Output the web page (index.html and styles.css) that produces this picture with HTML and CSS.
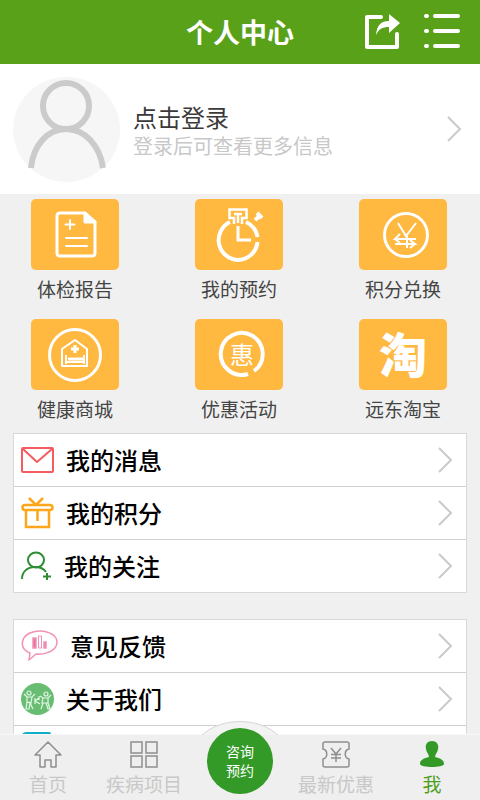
FILE: index.html
```html
<!DOCTYPE html>
<html lang="zh-CN">
<head>
<meta charset="utf-8">
<meta name="viewport" content="width=device-width, initial-scale=1">
<title>个人中心</title>
<link rel="stylesheet" href="styles.css">
</head>
<body>
<header class="topbar">
  <h1 class="topbar-title">个人中心</h1>
  <div class="topbar-actions">
    <button class="icon-button" type="button" aria-label="分享">
      <svg width="36" height="36" viewBox="0 0 36 36" fill="none" stroke="#fff" stroke-width="4" stroke-linecap="round" stroke-linejoin="round">
        <path d="M17 3H3V33H33V20"/>
        <path d="M12 21C13 11 17 7 25 7V0L36 9L25 19V13C18 13 15 15 12 21Z" fill="#fff" stroke="none"/>
      </svg>
    </button>
    <button class="icon-button" type="button" aria-label="菜单">
      <svg width="36" height="36" viewBox="0 0 36 36" stroke="#fff" stroke-width="4" stroke-linecap="round">
        <path d="M2 2H3M11 2H34M2 17H3M11 17H34M2 32H3M11 32H34"/>
      </svg>
    </button>
  </div>
</header>

<main class="content">
  <a class="profile" href="#login">
    <svg class="avatar" viewBox="0 0 107 105">
      <ellipse cx="53.500" cy="52.500" rx="53.500" ry="52.500" fill="#f6f6f6"/>
      <g fill="none" stroke="#cbcbcb" stroke-width="6">
        <circle cx="53" cy="29" r="23"/>
        <path d="M18 91C20 69 34 52 53 52S87 69 90 91"/>
      </g>
    </svg>
    <span class="profile-text">
      <strong class="profile-name">点击登录</strong>
      <span class="profile-hint">登录后可查看更多信息</span>
    </span>
    <svg class="chevron" viewBox="0 0 16 26"><path d="M2 1L14 13L2 25"/></svg>
  </a>

  <nav class="shortcuts" aria-label="快捷服务">
    <a class="shortcut" href="#report">
      <span class="tile">
        <svg viewBox="0 0 88 71" fill="none" stroke="#fff" stroke-width="3" stroke-linecap="round" stroke-linejoin="round">
          <path d="M54 14H29Q26 14 26 17V54Q26 57 29 57H61Q64 57 64 54V23Z"/>
          <path d="M54 14V23H64Z" fill="#fff"/>
          <path d="M39 21V30M34.500 25.500H43.500M35 39H56M35 47H56" stroke-width="2"/>
        </svg>
      </span>
      <span class="shortcut-label">体检报告</span>
    </a>
    <a class="shortcut" href="#booking">
      <span class="tile">
        <svg viewBox="0 0 88 71" fill="none" stroke="#fff" stroke-width="4">
          <path d="M35 23A20 20 0 0 0 42.500 61A20 20 0 0 0 62.500 43M62.500 38A20 20 0 0 0 51 23"/>
          <path d="M39 25V19H34.500V10.500H51.500V19H47V25M39 15H47M43 15V24" stroke-width="2.500"/>
          <path d="M43 27V41H56" stroke-width="3"/>
          <path d="M60 21L65 17M62 14L67 19" stroke-width="4"/>
        </svg>
      </span>
      <span class="shortcut-label">我的预约</span>
    </a>
    <a class="shortcut" href="#exchange">
      <span class="tile">
        <svg viewBox="0 0 88 71" fill="none" stroke="#fff" stroke-width="2">
          <circle cx="47" cy="36" r="21.500" stroke-width="3"/>
          <path d="M39 24L47 37L57 24M48 37V49M57 40H36L41 35M36 40L41 44M36 45H56L51 41M56 45L51 49"/>
        </svg>
      </span>
      <span class="shortcut-label">积分兑换</span>
    </a>
    <a class="shortcut" href="#mall">
      <span class="tile">
        <svg viewBox="0 0 88 71" fill="none" stroke="#fff" stroke-width="2">
          <circle cx="44" cy="36" r="25.500" stroke-width="3"/>
          <path d="M31 47V30L44 21L56 30V47Z" stroke-linejoin="round"/>
          <path d="M44 26V34M40 30H48" stroke-width="3"/>
          <path d="M35 36V45M53 36V45M35 43H53"/>
          <path d="M37 40H52" stroke-width="3"/>
        </svg>
      </span>
      <span class="shortcut-label">健康商城</span>
    </a>
    <a class="shortcut" href="#offers">
      <span class="tile">
        <svg viewBox="0 0 88 71" fill="none" stroke="#fff" stroke-width="4">
          <path d="M59 52A21 21 0 1 0 53 55"/>
          <text x="47" y="45" class="glyph-offer">惠</text>
        </svg>
      </span>
      <span class="shortcut-label">优惠活动</span>
    </a>
    <a class="shortcut" href="#taobao">
      <span class="tile tile-glyph">淘</span>
      <span class="shortcut-label">远东淘宝</span>
    </a>
  </nav>

  <ul class="menu">
    <li><a class="menu-row" href="#messages">
      <svg width="33" height="26" viewBox="0 0 33 26" fill="none" stroke="#f55c60" stroke-width="2" stroke-linejoin="round"><rect x="1" y="1" width="31" height="24" rx="1"/><path d="M2 2L16 15L31 2"/></svg>
      <span class="menu-label">我的消息</span>
      <svg class="chevron" viewBox="0 0 16 26"><path d="M2 1L14 13L2 25"/></svg>
    </a></li>
    <li><a class="menu-row" href="#points">
      <svg width="33" height="32" viewBox="0 0 33 32" fill="none" stroke="#fba61b" stroke-width="2.500"><rect x="1.500" y="8" width="30" height="5" rx="2.500"/><path d="M5 13V30H28V13M16.500 13V24M15 8L8 1M15 8L22 1"/></svg>
      <span class="menu-label">我的积分</span>
      <svg class="chevron" viewBox="0 0 16 26"><path d="M2 1L14 13L2 25"/></svg>
    </a></li>
    <li><a class="menu-row" href="#following">
      <svg width="31" height="30" viewBox="0 0 31 30" fill="none" stroke="#2e8c32" stroke-width="2"><ellipse cx="15" cy="9" rx="8" ry="7.500"/><path d="M1 28C1 21 6 16 14 16C19 16 23 18 25 21M26 22V29M22 25.500H30"/></svg>
      <span class="menu-label">我的关注</span>
      <svg class="chevron" viewBox="0 0 16 26"><path d="M2 1L14 13L2 25"/></svg>
    </a></li>
  </ul>

  <ul class="menu">
    <li><a class="menu-row" href="#feedback">
      <svg width="37" height="32" viewBox="0 0 37 32" fill="none" stroke="#f191b6" stroke-width="1.500"><path d="M9 23C-3 18 0 5 12 2C24 -1 36 4 36 12C36 20 26 25 15 24L8 30Z" stroke-linejoin="round"/><path d="M12 8H15V18H12ZM23 12H25V18H23Z" fill="#ed6f9f"/><path d="M17.500 6H20.500V18H17.500Z" stroke-width="1"/></svg>
      <span class="menu-label">意见反馈</span>
      <svg class="chevron" viewBox="0 0 16 26"><path d="M2 1L14 13L2 25"/></svg>
    </a></li>
    <li><a class="menu-row" href="#about">
      <svg width="33" height="32" viewBox="0 0 33 32" fill="none" stroke="#e3f6e6" stroke-width="1.200"><ellipse cx="16.500" cy="16" rx="16.500" ry="16" fill="#68bd73" stroke="none"/><circle cx="8" cy="10" r="2"/><circle cx="25" cy="11" r="2"/><path d="M3 11L6 14H11L14 11M6 14V19L10 20L11 14M6 19L5 26H8L9 20L12 26M19 13L22 15H27L30 12M22 15L21 20H27V15M22 20L20 26M25 20L27 26H29L27 20M14 15V21M14 18L18 15M14 18L19 21M18 13V17"/></svg>
      <span class="menu-label">关于我们</span>
      <svg class="chevron" viewBox="0 0 16 26"><path d="M2 1L14 13L2 25"/></svg>
    </a></li>
    <li><a class="menu-row" href="#more" aria-label="更多">
      <svg width="30" height="40" viewBox="0 0 30 40" fill="none" stroke="#10adc6" stroke-width="4" stroke-linecap="round"><path d="M28 2H6Q2 2 2 6V38H28"/></svg>
    </a></li>
  </ul>
</main>

<nav class="tabbar" aria-label="主导航">
  <a class="tab" href="#home">
    <svg width="28" height="28" viewBox="0 0 28 28" fill="none" stroke="#8f8f8f" stroke-width="1.500" stroke-linejoin="round"><path d="M14 2L1 15H6V27H11V20H17V27H22V15H27Z"/></svg>
    <span>首页</span>
  </a>
  <a class="tab" href="#projects">
    <svg width="28" height="28" viewBox="0 0 28 28" fill="none" stroke="#8f8f8f" stroke-width="1.500"><rect x="1" y="2" width="11" height="11"/><rect x="16" y="2" width="11" height="11"/><rect x="1" y="16" width="11" height="11"/><rect x="16" y="16" width="11" height="11"/></svg>
    <span>疾病项目</span>
  </a>
  <div class="tab-center">
    <svg class="bump" viewBox="0 0 76 14"><path d="M0 14C20 -4 56 -4 76 14" fill="#f3f3f3" stroke="#d6d6d6"/></svg>
    <button class="consult" type="button">咨询<br>预约</button>
  </div>
  <a class="tab" href="#deals">
    <svg width="28" height="28" viewBox="0 0 28 28" fill="none" stroke="#8f8f8f" stroke-width="1.500"><path d="M3 2H25Q27 2 27 4V9C22 10 22 18 27 19V25Q27 27 25 27H3Q1 27 1 25V19C6 18 6 10 1 9V4Q1 2 3 2ZM9 8L14 14L19 8M14 14V22M9 14.500H19M9 18H19"/></svg>
    <span>最新优惠</span>
  </a>
  <a class="tab tab-active" href="#me" aria-current="page">
    <svg width="28" height="28" viewBox="0 0 28 28" fill="#349a27"><path d="M14 1C9 1 7 5 8 9C8 12 11 14 11 17C6 18 2 20 2 24C2 28 26 28 26 24C26 20 22 18 17 17C17 14 20 12 20 9C21 5 19 1 14 1Z"/></svg>
    <span>我</span>
  </a>
</nav>
</body>
</html>
```

FILE: styles.css
```css
* {
  box-sizing: border-box;
}

body {
  margin: 0;
  height: 100vh;
  display: flex;
  flex-direction: column;
  overflow: hidden;
  background: #f0f0f0;
  color: #000;
  font-family: "Noto Sans CJK SC", sans-serif;
}

a {
  color: inherit;
  text-decoration: none;
}

button {
  padding: 0;
  border: 0;
  background: none;
  font: inherit;
}

svg {
  display: block;
  flex: none;
}

.topbar {
  flex: none;
  display: grid;
  grid-template-columns: 1fr auto 1fr;
  align-items: center;
  height: 64px;
  padding: 0 20px;
  background: #5aa11a;
  color: #fff;
}

.topbar-title {
  grid-column: 2;
  margin: 0;
  font-size: 27px;
  line-height: 38px;
  font-weight: 700;
}

.topbar-actions {
  display: flex;
  justify-content: flex-end;
  gap: 24px;
}

.content {
  flex: 1;
  min-height: 0;
  overflow: hidden;
}

.profile {
  display: flex;
  align-items: center;
  gap: 13px;
  height: 130px;
  padding: 0 18px 0 13px;
  background: #fff;
}

.avatar {
  width: 107px;
  height: 105px;
}

.profile-text {
  flex: 1;
  display: flex;
  flex-direction: column;
  padding-top: 5px;
}

.profile-name {
  color: #3a3a3a;
  font-size: 24px;
  line-height: 28px;
  font-weight: 400;
}

.profile-hint {
  color: #c8c8c8;
  font-size: 20px;
  line-height: 30px;
}

.chevron {
  width: 16px;
  height: 26px;
  fill: none;
  stroke: #cacaca;
  stroke-width: 2;
}

.shortcuts {
  display: grid;
  grid-template-columns: repeat(3, 88px);
  justify-content: space-between;
  row-gap: 15px;
  padding: 5px 33px 9px 31px;
}

.shortcut {
  display: flex;
  flex-direction: column;
  align-items: center;
  gap: 4px;
}

.tile {
  width: 88px;
  height: 71px;
  border-radius: 5px;
  background: #ffb840;
}

.tile-glyph {
  color: #fff;
  font-size: 48px;
  font-weight: 900;
  line-height: 66px;
  text-align: center;
}

.glyph-offer {
  fill: #fff;
  stroke: none;
  font-size: 24px;
  text-anchor: middle;
}

.shortcut-label {
  color: #444;
  font-size: 19px;
  line-height: 30px;
}

.menu {
  margin: 0 13px 26px;
  padding: 0;
  border: 1px solid #d8d8d8;
  background: #fff;
  list-style: none;
}

.menu li + li {
  border-top: 1px solid #d0d0d0;
}

.menu-row {
  display: flex;
  align-items: center;
  gap: 12px;
  height: 52px;
  padding: 0 13px 0 7px;
}

.menu-label {
  flex: 1;
  font-size: 24px;
  line-height: 36px;
  font-weight: 500;
}

.tabbar {
  flex: none;
  position: relative;
  display: grid;
  grid-template-columns: repeat(5, 1fr);
  height: 66px;
  border-top: 1px solid #f8f8f8;
  background: #efefef;
}

.tab {
  display: flex;
  flex-direction: column;
  align-items: center;
  padding-top: 5px;
  color: #c8c8c8;
  font-size: 19px;
  line-height: 32px;
  white-space: nowrap;
}

.tab-active {
  color: #4da01c;
}

.tab-center {
  position: relative;
  display: flex;
  flex-direction: column;
  align-items: center;
}

.bump {
  position: absolute;
  bottom: 100%;
  width: 76px;
  height: 14px;
}

.consult {
  position: absolute;
  top: -7px;
  width: 66px;
  height: 66px;
  border-radius: 50%;
  background: #349a27;
  color: #fff;
  font-size: 14px;
  line-height: 19px;
}
```
